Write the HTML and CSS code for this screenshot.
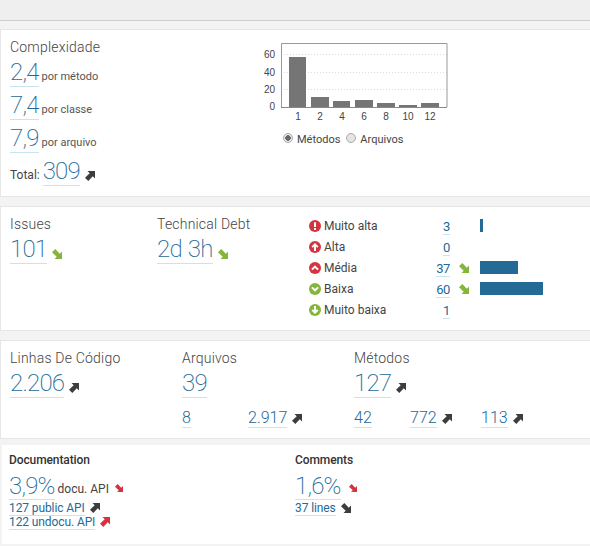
FILE: index.html
```html
<!DOCTYPE html>
<html lang="pt">
<head>
<meta charset="utf-8">
<title>Painel</title>
<link rel="stylesheet" href="styles.css">
</head>
<body>
<svg class="defs" width="0" height="0" aria-hidden="true">
  <symbol id="up" viewBox="0 0 10 10"><path d="M2.500 0H10V7.500L7.800 5.300 3.300 10 0 6.700 4.700 2.200z"/></symbol>
  <symbol id="down" viewBox="0 0 10 10"><path d="M2.500 10H10V2.500L7.800 4.700 3.300 0 0 3.300 4.700 7.800z"/></symbol>
</svg>
<div class="topbar"></div>

<section class="card complexity">
  <div class="cx-left">
    <h2 class="title">Complexidade</h2>
    <div class="cx-row"><a class="big">2,4</a><span class="note">por método</span></div>
    <div class="cx-row"><a class="big">7,4</a><span class="note">por classe</span></div>
    <div class="cx-row"><a class="big">7,9</a><span class="note">por arquivo</span></div>
    <div class="cx-row"><span class="total-label">Total:</span><a class="big">309</a><svg class="arrow dark"><use href="#up"/></svg></div>
  </div>
  <div class="chart">
    <svg class="plot" width="190" height="79" viewBox="0 0 190 79">
      <g class="grid">
        <line x1="24" x2="190" y1="24.500" y2="24.500"/>
        <line x1="24" x2="190" y1="42.500" y2="42.500"/>
        <line x1="24" x2="190" y1="59.500" y2="59.500"/>
      </g>
      <path class="frame" d="M24.500 77V13.500H190V77"/>
      <g class="bars">
        <rect x="32" y="27" width="17" height="50"/>
        <rect x="54" y="67" width="18" height="10"/>
        <rect x="76" y="71" width="17" height="6"/>
        <rect x="98" y="70" width="18" height="7"/>
        <rect x="120" y="73" width="18" height="4"/>
        <rect x="142" y="75" width="18" height="2"/>
        <rect x="164" y="73" width="18" height="4"/>
      </g>
      <line class="axis" x1="24" x2="190" y1="77.500" y2="77.500"/>
      <g class="ylab">
        <text x="18" y="27.500">60</text>
        <text x="18" y="45.500">40</text>
        <text x="18" y="62.500">20</text>
        <text x="18" y="80">0</text>
      </g>
    </svg>
    <div class="xlabels"><span>1</span><span>2</span><span>4</span><span>6</span><span>8</span><span>10</span><span>12</span></div>
    <div class="radios">
      <span class="radio on"></span><span class="radio-label">Métodos</span>
      <span class="radio"></span><span class="radio-label">Arquivos</span>
    </div>
  </div>
</section>

<section class="card issues">
  <div class="col-issues">
    <h2 class="title">Issues</h2>
    <div class="val"><a class="big">101</a><svg class="arrow green"><use href="#down"/></svg></div>
  </div>
  <div class="col-debt">
    <h2 class="title">Technical Debt</h2>
    <div class="val"><a class="big">2d 3h</a><svg class="arrow green"><use href="#down"/></svg></div>
  </div>
  <div class="severity">
    <div class="sev"><svg class="sev-icon" viewBox="0 0 12 12"><circle cx="6" cy="6" r="6" fill="#d4333f"/><path d="M5 2.200h2V7H5zM5 8h2v2H5z" fill="#fff"/></svg><span class="sev-name">Muito alta</span><span class="sev-num"><a class="num">3</a></span><span class="sev-trend"></span><span class="sev-bar"><i class="b3"></i></span></div>
    <div class="sev"><svg class="sev-icon" viewBox="0 0 12 12"><circle cx="6" cy="6" r="6" fill="#d4333f"/><path d="M6 2l3.500 3.500L8.200 6.700 7 5.500V10H5V5.500L3.800 6.700 2.500 5.500z" fill="#fff"/></svg><span class="sev-name">Alta</span><span class="sev-num"><a class="num">0</a></span><span class="sev-trend"></span><span class="sev-bar"></span></div>
    <div class="sev"><svg class="sev-icon" viewBox="0 0 12 12"><circle cx="6" cy="6" r="6" fill="#d4333f"/><path d="M6 3.200l3.800 3.700-1.400 1.400L6 6 3.600 8.300 2.200 6.900z" fill="#fff"/></svg><span class="sev-name">Média</span><span class="sev-num"><a class="num">37</a></span><span class="sev-trend"><svg class="arrow green"><use href="#down"/></svg></span><span class="sev-bar"><i class="b37"></i></span></div>
    <div class="sev"><svg class="sev-icon" viewBox="0 0 12 12"><circle cx="6" cy="6" r="6" fill="#85b53c"/><path d="M6 8.800L2.200 5.100l1.400-1.400L6 6l2.400-2.300 1.400 1.400z" fill="#fff"/></svg><span class="sev-name">Baixa</span><span class="sev-num"><a class="num">60</a></span><span class="sev-trend"><svg class="arrow green"><use href="#down"/></svg></span><span class="sev-bar"><i class="b60"></i></span></div>
    <div class="sev"><svg class="sev-icon" viewBox="0 0 12 12"><circle cx="6" cy="6" r="6" fill="#85b53c"/><path d="M6 10L2.500 6.500l1.300-1.200L5 6.500V2h2v4.500l1.200-1.200 1.300 1.200z" fill="#fff"/></svg><span class="sev-name">Muito baixa</span><span class="sev-num"><a class="num">1</a></span><span class="sev-trend"></span><span class="sev-bar"></span></div>
  </div>
</section>

<section class="card size">
  <div class="col-lines">
    <h2 class="title">Linhas De Código</h2>
    <div class="val"><a class="big">2.206</a><svg class="arrow dark"><use href="#up"/></svg></div>
  </div>
  <div class="col-files">
    <h2 class="title">Arquivos</h2>
    <div class="val"><a class="big">39</a></div>
    <div class="subs">
      <div class="sub w66"><a class="small">8</a></div>
      <div class="sub"><a class="small">2.917</a><svg class="arrow dark"><use href="#up"/></svg></div>
    </div>
  </div>
  <div class="col-methods">
    <h2 class="title">Métodos</h2>
    <div class="val"><a class="big">127</a><svg class="arrow dark"><use href="#up"/></svg></div>
    <div class="subs">
      <div class="sub w56"><a class="small">42</a></div>
      <div class="sub w71"><a class="small">772</a><svg class="arrow dark"><use href="#up"/></svg></div>
      <div class="sub"><a class="small">113</a><svg class="arrow dark"><use href="#up"/></svg></div>
    </div>
  </div>
</section>

<section class="card docs">
  <div class="doc-col">
    <h3 class="doc-title">Documentation</h3>
    <div class="doc-main"><a class="big">3,9%</a><span class="doc-note">docu. API</span><svg class="arrow red tiny"><use href="#down"/></svg></div>
    <div class="doc-sub"><a class="small">127 public API</a><svg class="arrow dark"><use href="#up"/></svg></div>
    <div class="doc-sub"><a class="small">122 undocu. API</a><svg class="arrow red"><use href="#up"/></svg></div>
  </div>
  <div class="doc-col">
    <h3 class="doc-title">Comments</h3>
    <div class="doc-main"><a class="big">1,6%</a><svg class="arrow red tiny wide"><use href="#down"/></svg></div>
    <div class="doc-sub"><a class="small">37 lines</a><svg class="arrow dark"><use href="#down"/></svg></div>
  </div>
</section>
</body>
</html>
```

FILE: styles.css
```css
* { box-sizing: border-box; }
html, body { margin: 0; padding: 0; }
body {
  width: 590px;
  height: 546px;
  overflow: hidden;
  background: #f3f3f3;
  font-family: Roboto, "Liberation Sans", sans-serif;
  color: #444;
  font-size: 13px;
}
.defs { display: block; height: 0; }
.topbar { height: 21px; background: #efefef; border-bottom: 1px solid #cfcfcf; }

.card {
  background: #fff;
  border: 1px solid #e6e6e6;
  border-right: 0;
  margin: 8px 0 9px;
  display: flex;
  padding: 8px 0 0 9px;
}
.title { margin: 0; font-size: 14px; font-weight: 300; letter-spacing: .2px; line-height: 18px; color: #444; }

a { color: #236a97; }
.big {
  display: inline-block;
  font-size: 24px;
  font-weight: 200;
  letter-spacing: -.8px;
  word-spacing: 1px;
  line-height: 26px;
  padding-bottom: 1px;
  border-bottom: 1px solid #cae3f2;
}
.small {
  display: inline-block;
  font-size: 16px;
  font-weight: 300;
  line-height: 19px;
  border-bottom: 1px solid #cae3f2;
}
.arrow { width: 10px; height: 10px; margin: 13px 0 0 5px; flex: none; }
.dark { fill: #3d3d3d; }
.green { fill: #85b53c; }
.red { fill: #d4333f; }
.val { display: flex; align-items: flex-start; height: 34px; padding-top: 3px; }

.complexity { height: 168px; }
.cx-left { width: 247px; }
.cx-row { display: flex; align-items: flex-start; height: 33px; padding-top: 3px; }
.note { font-size: 11px; line-height: 13px; margin: 11px 0 0 3px; color: #555; }
.total-label { font-size: 12px; line-height: 14px; margin: 10px 3px 0 0; }
.chart { width: 200px; }
.plot { display: block; margin-top: -8px; overflow: visible; font-family: "Liberation Sans", sans-serif; }
.grid line { stroke: #ddd; stroke-dasharray: 1 2; }
.frame { fill: none; stroke: #999; stroke-width: 1; }
.axis { stroke: #888; }
.bars rect { fill: #757575; }
.ylab text { font-size: 10px; text-anchor: end; fill: #444; }
.xlabels { display: flex; margin: 1px 0 0 30px; font: 10px/14px "Liberation Sans", sans-serif; color: #444; height: 14px; }
.xlabels span { width: 22px; text-align: center; }
.radios { display: flex; align-items: center; margin: 9px 0 0 26px; font-size: 11px; line-height: 14px; color: #444; }
.radio { width: 10px; height: 10px; border-radius: 50%; border: 1px solid #aaa; background: #e4e4e4; margin: 0 4px 4px 0; }
.radio.on { background: radial-gradient(circle, #666 0 2.500px, #e8e8e8 3px); }
.radio-label { margin-right: 6px; }

.issues { height: 125px; }
.col-issues { width: 147px; }
.col-debt { width: 152px; }
.severity { display: flex; flex-direction: column; }
.sev { display: flex; align-items: center; height: 21px; font-size: 12px; color: #444; }
.sev-icon { width: 12px; height: 12px; flex: none; margin-right: 3px; }
.sev-name { width: 100px; }
.sev-num { width: 26px; display: flex; justify-content: flex-end; padding-top: 2px; }
.num { display: block; font-size: 13px; font-weight: 400; letter-spacing: -.4px; line-height: 15px; border-bottom: 1px solid #cae3f2; }
.sev-trend { width: 30px; padding-left: 3px; display: flex; }
.sev-trend .arrow { margin: 0 0 0 6px; }
.sev-bar { display: block; }
.sev-bar i { display: block; height: 13px; background: #236a97; }
.b3 { width: 3px; }
.b37 { width: 38px; }
.b60 { width: 63px; }

.size { height: 99px; margin-bottom: 6px; }
.col-lines { width: 172px; }
.col-files { width: 172px; }
.subs { display: flex; margin-top: 7px; }
.sub { display: flex; align-items: flex-start; }
.sub .arrow { margin-top: 6px; }
.w66 { width: 66px; }
.w56 { width: 56px; }
.w71 { width: 71px; }

.docs { height: 99px; margin: 0 0 0 2px; border: 0; padding: 8px 0 0 7px; }
.doc-col { width: 286px; }
.doc-title { margin: 0; font-size: 12px; font-weight: 500; letter-spacing: -.1px; line-height: 15px; color: #333; }
.doc-main { display: flex; align-items: flex-start; height: 33px; padding-top: 6px; }
.doc-main .big { line-height: 24px; }
.doc-note { font-size: 12px; line-height: 14px; margin: 8px 0 0 3px; }
.doc-main .arrow { margin-top: 10px; }
.tiny { width: 8px; height: 8px; margin-left: 6px; }
.wide { margin-left: 8px; }
.doc-sub { display: flex; align-items: flex-start; height: 14px; }
.doc-sub .small { font-size: 12px; font-weight: 400; letter-spacing: -.1px; line-height: 14px; }
.doc-sub .arrow { margin-top: 2px; }
```
